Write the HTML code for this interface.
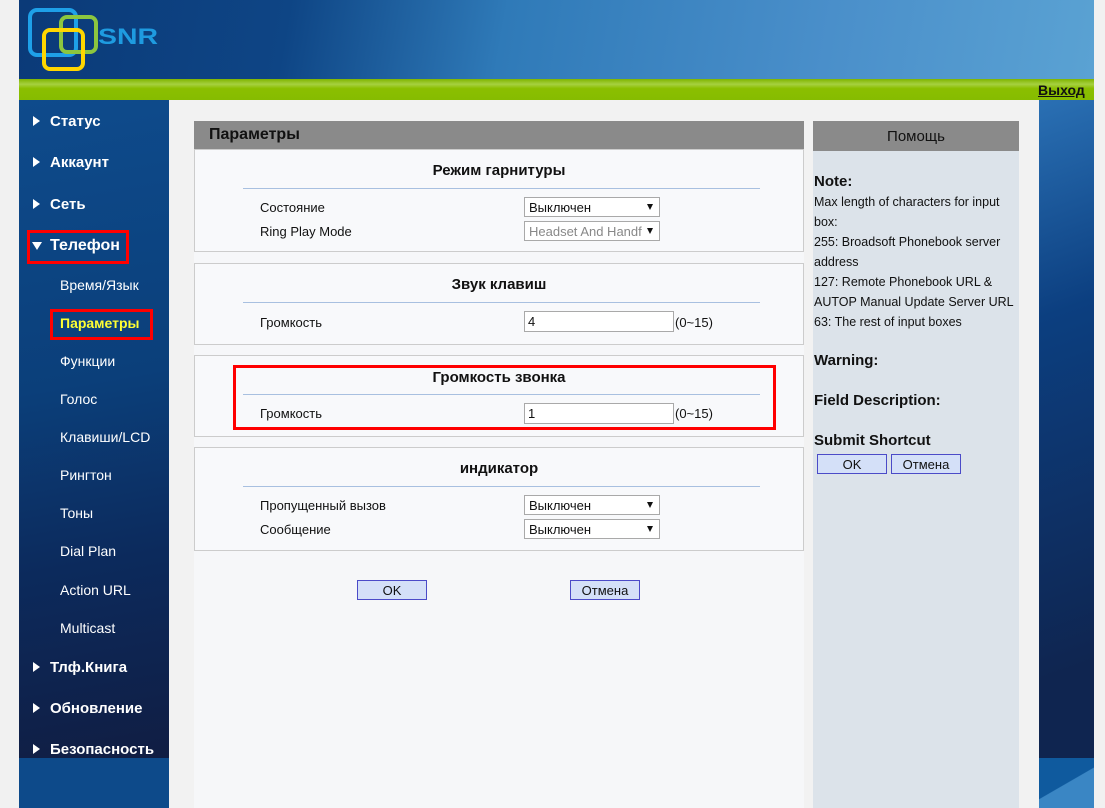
<!DOCTYPE html>
<html><head><meta charset="utf-8"><style>
*{margin:0;padding:0;box-sizing:border-box}
body{width:1105px;height:808px;position:relative;overflow:hidden;background:#f1f1f1;font-family:"Liberation Sans","DejaVu Sans",sans-serif;font-size:13px;color:#111}
.a{position:absolute}
#hdr{left:19px;top:0;width:1075px;height:79px;background:linear-gradient(100deg,#0b3a78 0%,#0e4585 25%,#2f7ab8 45%,#4a8fca 75%,#5aa2d3 100%)}
#grn{left:19px;top:79px;width:1075px;height:21px;background:linear-gradient(#7fb400,#a6d040 25%,#8bbf00 45%,#86bc00)}
#nav{left:19px;top:100px;width:150px;height:708px;background:linear-gradient(170deg,#0e4b8c 0%,#0b3f7a 40%,#0c2a5c 65%,#101e44 92%);}
#navb{left:19px;top:758px;width:150px;height:50px;background:#0d4a8a}
#cnt{left:169px;top:100px;width:870px;height:708px;background:#f2f2f2}
#rs{left:1039px;top:100px;width:55px;height:708px;background:linear-gradient(160deg,#2a70b4,#0c3f80 30%,#0f2550 80%)}
#rsb{left:1039px;top:758px;width:55px;height:50px;background:linear-gradient(150deg,#0f5a9e 50%,#3a86c4 51%)}
.m{color:#fff;font-weight:bold;font-size:15px;left:50px}
.tri{position:absolute;left:-17px;top:3px;width:0;height:0;border-left:7px solid #fff;border-top:5px solid transparent;border-bottom:5px solid transparent}
.trd{position:absolute;left:-18px;top:5px;width:0;height:0;border-top:8px solid #fff;border-left:5px solid transparent;border-right:5px solid transparent}
.s{color:#fff;font-size:14px;left:60px}
.red{border:3px solid #f00}
#main{left:194px;top:121px;width:610px;height:687px;background:#f6f7f9}
.ph{left:194px;top:121px;width:610px;height:28px;background:#8a8a8a;font-weight:bold;font-size:16px;padding:5px 15px}
.pn{left:194px;width:610px;background:#f8f9fb;border:1px solid #ccc}
.t{width:610px;left:194px;text-align:center;font-weight:bold;font-size:15px}
.ln{left:243px;width:517px;height:1px;background:#a8c0e0}
.l{left:260px;font-size:13px}
.sel{left:524px;width:136px;height:20px;background:#fff;border:1px solid #a9a9a9;font-size:13px;padding:2px 4px}
.sel:after{content:"";position:absolute;right:6px;top:6px;border-top:6px solid #111;border-left:3px solid transparent;border-right:3px solid transparent}
.inp{left:524px;width:150px;height:21px;background:#fff;border:1px solid #a9a9a9;padding:2px 3px;font-size:13px}
.rg{left:675px;font-size:13px}
.btn{height:20px;background:#d4e0f8;border:1px solid #4b4bc8;text-align:center;font-size:13px;padding-top:2px}
</style></head><body>
<div class="a" id="hdr"></div>
<svg class="a" style="left:0;top:0" width="170" height="79" viewBox="0 0 170 79">
<rect x="30" y="10" width="46" height="45" rx="7" fill="none" stroke="#1ea0e8" stroke-width="4"/>
<rect x="61" y="17" width="35" height="35" rx="6" fill="none" stroke="#8cc63f" stroke-width="4"/>
<rect x="44" y="30" width="39" height="39" rx="6" fill="none" stroke="#ffd600" stroke-width="4"/>
<text x="98" y="44" font-family="Liberation Sans" font-weight="bold" font-size="22" fill="#1e9be0" textLength="60" lengthAdjust="spacingAndGlyphs">SNR</text>
</svg>
<div class="a" id="grn"></div>
<div class="a" style="left:1038px;top:82px;font-weight:bold;font-size:14px;text-decoration:underline">Выход</div>
<div class="a" id="nav"></div>
<div class="a" id="navb"></div>
<div class="a" id="cnt"></div>
<div class="a" id="rs"></div>
<div class="a" id="rsb"></div>

<div class="a m" style="top:113px"><span class="tri"></span>Статус</div>
<div class="a m" style="top:154px"><span class="tri"></span>Аккаунт</div>
<div class="a m" style="top:196px"><span class="tri"></span>Сеть</div>
<div class="a m" style="top:237px;font-size:16px"><span class="trd"></span>Телефон</div>
<div class="a red" style="left:27px;top:230px;width:102px;height:34px"></div>
<div class="a s" style="top:277px">Время/Язык</div>
<div class="a s" style="top:315px;color:#ffff33;font-weight:bold">Параметры</div>
<div class="a red" style="left:50px;top:309px;width:103px;height:31px"></div>
<div class="a s" style="top:353px">Функции</div>
<div class="a s" style="top:391px">Голос</div>
<div class="a s" style="top:429px">Клавиши/LCD</div>
<div class="a s" style="top:467px">Рингтон</div>
<div class="a s" style="top:505px">Тоны</div>
<div class="a s" style="top:543px">Dial Plan</div>
<div class="a s" style="top:582px">Action URL</div>
<div class="a s" style="top:620px">Multicast</div>
<div class="a m" style="top:659px"><span class="tri"></span>Тлф.Книга</div>
<div class="a m" style="top:700px"><span class="tri"></span>Обновление</div>
<div class="a m" style="top:741px"><span class="tri"></span>Безопасность</div>

<div class="a" id="main"></div>
<div class="a ph">Параметры</div>

<div class="a pn" style="top:149px;height:103px"></div>
<div class="a t" style="top:162px">Режим гарнитуры</div>
<div class="a ln" style="top:188px"></div>
<div class="a l" style="top:200px">Состояние</div>
<div class="a sel" style="top:197px">Выключен</div>
<div class="a l" style="top:224px">Ring Play Mode</div>
<div class="a sel" style="top:221px;color:#888;overflow:hidden;white-space:nowrap;padding-right:16px">Headset And Handf</div>

<div class="a pn" style="top:263px;height:82px"></div>
<div class="a t" style="top:276px">Звук клавиш</div>
<div class="a ln" style="top:302px"></div>
<div class="a l" style="top:315px">Громкость</div>
<div class="a inp" style="top:311px">4</div>
<div class="a rg" style="top:315px">(0~15)</div>

<div class="a pn" style="top:355px;height:82px"></div>
<div class="a t" style="top:369px">Громкость звонка</div>
<div class="a ln" style="top:394px"></div>
<div class="a l" style="top:406px">Громкость</div>
<div class="a inp" style="top:403px">1</div>
<div class="a rg" style="top:406px">(0~15)</div>
<div class="a red" style="left:233px;top:365px;width:543px;height:65px"></div>

<div class="a pn" style="top:447px;height:104px"></div>
<div class="a t" style="top:460px">индикатор</div>
<div class="a ln" style="top:486px"></div>
<div class="a l" style="top:498px">Пропущенный вызов</div>
<div class="a sel" style="top:495px">Выключен</div>
<div class="a l" style="top:522px">Сообщение</div>
<div class="a sel" style="top:519px">Выключен</div>

<div class="a btn" style="left:357px;top:580px;width:70px">OK</div>
<div class="a btn" style="left:570px;top:580px;width:70px">Отмена</div>

<div class="a" style="left:813px;top:121px;width:206px;height:687px;background:#dce3ea"></div>
<div class="a" style="left:813px;top:121px;width:206px;height:30px;background:#8a8a8a;text-align:center;font-size:15px;padding-top:7px">Помощь</div>
<div class="a" style="left:814px;top:172px;width:200px;font-size:12.5px;line-height:20px">
<div style="font-weight:bold;font-size:15px">Note:</div>
Max length of characters for input box:<br>255: Broadsoft Phonebook server address<br>127: Remote Phonebook URL &amp; AUTOP Manual Update Server URL<br>63: The rest of input boxes
<div style="font-weight:bold;font-size:15px;margin-top:19px">Warning:</div>
<div style="font-weight:bold;font-size:15px;margin-top:20px">Field Description:</div>
<div style="font-weight:bold;font-size:15px;margin-top:20px">Submit Shortcut</div>
</div>
<div class="a btn" style="left:817px;top:454px;width:70px;height:20px">OK</div>
<div class="a btn" style="left:891px;top:454px;width:70px;height:20px">Отмена</div>
</body></html>
